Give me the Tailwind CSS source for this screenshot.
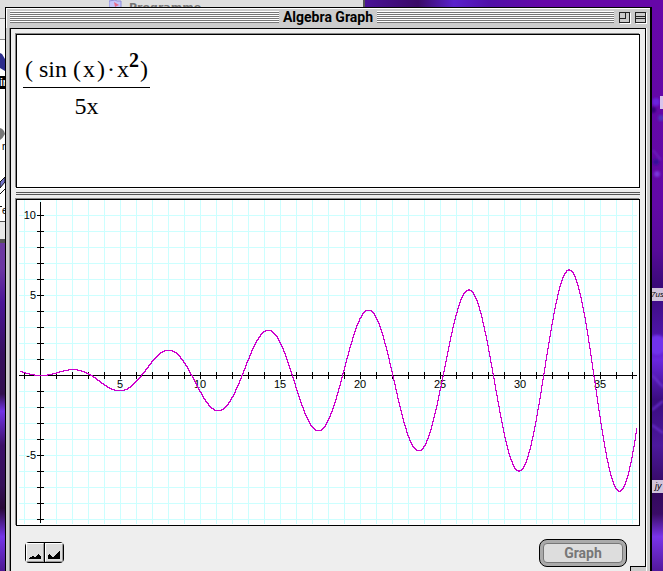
<!DOCTYPE html>
<html lang="en">
<head>
<meta charset="utf-8">
<meta name="viewport" content="width=device-width, initial-scale=1">
<title>Algebra Graph</title>
<script src="https://cdn.jsdelivr.net/npm/@tailwindcss/browser@4"></script>
</head>
<body class="relative h-screen overflow-hidden bg-[#4a0a8c] font-['Liberation_Sans',Arial,sans-serif] text-black">

<!-- Desktop wallpaper -->
<svg class="absolute inset-0 h-full w-full" aria-hidden="true">
  <defs>
    <linearGradient id="wallR" x1="0" y1="0" x2="0" y2="1">
      <stop offset="0" stop-color="#6606a8"/><stop offset=".36" stop-color="#6208a6"/><stop offset=".44" stop-color="#560a98"/><stop offset=".5" stop-color="#3a0a78"/>
      <stop offset=".58" stop-color="#4c14a4"/><stop offset=".63" stop-color="#6a26e0"/><stop offset=".7" stop-color="#3a0c80"/><stop offset=".78" stop-color="#4c189c"/><stop offset=".86" stop-color="#32085c"/>
      <stop offset=".9" stop-color="#3a0c66"/><stop offset=".94" stop-color="#7a34ea"/><stop offset="1" stop-color="#52189c"/>
    </linearGradient>
    <linearGradient id="wallL" x1="0" y1="0" x2="0" y2="1">
      <stop offset=".42" stop-color="#6c3aa0"/><stop offset=".47" stop-color="#6c36a2"/><stop offset=".53" stop-color="#4a1496"/><stop offset=".62" stop-color="#36105e"/><stop offset=".69" stop-color="#32104e"/>
      <stop offset=".72" stop-color="#7234e6"/><stop offset=".78" stop-color="#3c1068"/><stop offset=".85" stop-color="#341058"/><stop offset=".89" stop-color="#280838"/><stop offset=".94" stop-color="#7434e8"/><stop offset="1" stop-color="#4c1890"/>
    </linearGradient>
    <linearGradient id="wallT"><stop offset="0" stop-color="#4a1298"/><stop offset=".3" stop-color="#3a0a66"/><stop offset=".5" stop-color="#5a20cc"/><stop offset=".7" stop-color="#5010a8"/><stop offset="1" stop-color="#6606a8"/></linearGradient>
    <filter id="soft"><feGaussianBlur stdDeviation="1"/></filter>
  </defs>
  <rect width="100%" height="100%" fill="url(#wallL)"/>
  <rect x="364" width="180" height="8" fill="url(#wallT)"/>
  <rect x="544" width="100%" height="100%" fill="url(#wallR)"/>
  <g filter="url(#soft)">
    <circle cx="656" cy="102" r="4" fill="#6a20dc"/><circle cx="653" cy="110" r="3" fill="#35067a"/><circle cx="661" cy="118" r="3" fill="#5030c0"/>
    <circle cx="656" cy="162" r="3" fill="#35109a"/><circle cx="657" cy="174" r="3" fill="#7a34dc"/><path d="M653 150l8 10" stroke="#7340dc"/>
    <circle cx="657" cy="345" r="10" fill="#7130ec"/><path d="M652 375l11 12M652 410l11-9M652 425l11 8" stroke="#6a30d0" stroke-width="2"/>
  </g>
</svg>

<!-- Labels of desktop icons showing beside the window -->
<div class="absolute left-[660px] top-24 h-[13px] w-4 bg-[#d9c4ec]"></div>
<div class="absolute left-[650px] top-72 h-[13px] w-6 overflow-hidden bg-[#d0c4dc] pl-px text-[8px] leading-[13px] italic">7us</div>
<div class="absolute left-[652px] top-[480px] h-[13px] w-6 overflow-hidden bg-[#d0c4dc] pl-[3px] text-[9px] leading-[13px] italic">jy</div>

<!-- Finder window behind -->
<section class="absolute left-0 top-0 h-[243px] w-[365px] overflow-hidden border-r-2 border-b-4 border-[#555] bg-[#dedede]" aria-label="Programme">
  <div class="flex h-[18px] gap-1 pl-[109px]">
    <svg class="h-4 w-4 shrink-0" viewBox="0 0 16 16" aria-hidden="true"><path d="M0 1l6-1 2 1h4v8H0z" fill="#c4c4fa" stroke="#8c8cd8"/><path d="M5 2l5 3-4 2z" fill="#e86a8a"/></svg>
    <span class="text-[11px] leading-4 font-bold text-[#777] font-['DejaVu_Sans',sans-serif]">Programme</span>
  </div>
  <div class="h-[22px] border-y border-[#888] bg-[#eee]"></div>
  <div class="h-[182px] border-b border-[#555] bg-white">
    <svg class="h-[182px] w-5" viewBox="0 0 20 182" aria-hidden="true">
      <path d="M0 13l2 1 3 5v12l-5-3z" fill="#2c2c8c"/><rect y="36" width="5" height="13" fill="#000"/>
      <path d="M0 88q4 1 5 6q-2 4-5 6z" fill="#777"/><path d="M0 142l5-5v5l-5 6z" fill="#7474c8" stroke="#111"/><path d="M0 154l5-5" stroke="#111"/>
      <path d="M0 166.500h2" stroke="#111"/>
      <text x="0" y="46" font-size="10" font-weight="bold" fill="#fff">in</text><text x="2" y="110" font-size="10">n</text><text x="2" y="174" font-size="10">e</text>
    </svg>
  </div>
  <div class="h-5 bg-[#e8e8e8]"></div>
</section>

<!-- Algebra Graph window -->
<main class="relative mt-[7px] mr-[11px] ml-[5px] flex h-[calc(100vh-7px)] flex-col border-t border-r-2 border-l border-black bg-[#ccc]">
  <header class="grid h-5 shrink-0 grid-cols-[1fr_auto_1fr] gap-1 border-t border-l border-white pt-0.5 pr-1 pl-[3px]">
    <div class="h-3 bg-[repeating-linear-gradient(to_bottom,#fff_0_1px,#777_1px_2px)]"></div>
    <h1 class="text-[14px] leading-[13px] font-bold font-['Roboto',sans-serif]">Algebra Graph</h1>
    <div class="flex gap-[5px]">
      <div class="h-3 flex-1 bg-[repeating-linear-gradient(to_bottom,#fff_0_1px,#777_1px_2px)]"></div>
      <button class="mt-px h-[11px] w-[11px]" aria-label="Zoom window">
        <svg class="block h-[11px] w-[11px] overflow-visible" viewBox="0 0 11 11" shape-rendering="crispEdges"><path d="M11.500 1v10.500H1" fill="none" stroke="#fff"/><rect x=".5" y=".5" width="10" height="10" fill="#ccc" stroke="#222"/><path d="M6.500 1v5.500H1" fill="none" stroke="#222"/></svg>
      </button>
      <button class="mt-px h-[11px] w-[11px]" aria-label="Collapse window">
        <svg class="block h-[11px] w-[11px] overflow-visible" viewBox="0 0 11 11" shape-rendering="crispEdges"><path d="M11.500 1v10.500H1" fill="none" stroke="#fff"/><rect x=".5" y=".5" width="10" height="10" fill="#ccc" stroke="#222"/><path d="M1 4.500h9M1 6.500h9" stroke="#222"/></svg>
      </button>
    </div>
  </header>

  <div class="mr-1 ml-1 flex min-h-0 flex-1 flex-col border-x border-t border-black bg-[#eee] px-[5px] pt-[5px] shadow-[-1px_0_0_#888,1px_0_0_#fff]">
    <section class="flex h-[154px] shrink-0 border border-black bg-white pt-3.5 pl-1.5 font-['Liberation_Serif',serif] text-[24px] leading-6 shadow-[-1px_-1px_0_#888]" aria-label="Formula">
      <div class="flex flex-col items-center self-start">
        <div class="h-[39px] border-b border-black px-0.5 pt-2 whitespace-nowrap">( sin (<span class="px-0.5">x</span>)<span class="px-0.5">·</span>x<sup class="relative -top-2.5 pr-px text-[20px] leading-none font-bold">2</sup>)</div>
        <div class="pt-1.5">5x</div>
      </div>
    </section>
    <div class="flex h-[11px] shrink-0 flex-col gap-px border-t border-white pt-[3px]" role="separator"><i class="h-px bg-[#555]"></i><i class="h-px bg-[#555]"></i></div>
    <section class="h-[327px] shrink-0 border border-black bg-white shadow-[-1px_-1px_0_#888]" aria-label="Graph">
      <svg id="plot" class="block h-full w-full font-['Liberation_Sans',Arial,sans-serif] text-[11px]" shape-rendering="crispEdges" role="img" aria-label="Plot of sin(x) times x squared over 5x">
        <path id="grid" fill="none" stroke="#ccffff"/>
        <path id="axes" fill="none" stroke="#000"/>
        <g id="labels"></g>
        <path id="curve" fill="none" stroke="#cc00cc"/>
      </svg>
    </section>
    <footer class="flex items-start justify-between pt-[13px] pr-[13px] pl-[9px]">
      <div class="mt-[3px] flex rounded-sm border border-black bg-black">
        <button class="h-[19px] w-[18px] border border-t-white border-r-[#999] border-b-[#999] border-l-white bg-[#ddd]" aria-label="Zoom out"><svg class="block h-[17px] w-4" viewBox="0 0 16 17" shape-rendering="crispEdges"><path d="M2 15v-1l2-1 1-1h1l1 1h1l2-2 1-1 2 2 1 1v2z"/></svg></button>
        <button class="ml-px h-[19px] w-[18px] border border-t-white border-r-[#999] border-b-[#999] border-l-white bg-[#ddd]" aria-label="Zoom in"><svg class="block h-[17px] w-4" viewBox="0 0 16 17" shape-rendering="crispEdges"><path d="M2 15v-4l1-1 4 3 7-7v9z"/></svg></button>
      </div>
      <button class="h-7 w-[88px] rounded-lg border border-black bg-[#aaa] p-[3px]" disabled><span class="flex h-full items-center justify-center rounded-sm border border-[#777] bg-[#ddd] text-[14px] leading-4 font-bold text-[#777] font-['Roboto',sans-serif]">Graph</span></button>
    </footer>
  </div>
  <!-- Grow box corner -->
  <div class="absolute right-1 bottom-0 h-[5px] w-4 border-t border-l border-black bg-[#ccc]"></div>
</main>

<script>
  const svg = document.getElementById('plot');
  const UNIT = 16, OX = 23, OY = 175;
  function draw() {
    const { width: w, height: h } = svg.getBoundingClientRect();
    let grid = '', axes = `M2 ${OY + .5}H${w - 2}M${OX + .5} 2V${h - 2}`, labels = '';
    for (let i = Math.ceil((3 - OX) / UNIT); OX + i * UNIT < w - 2; i++) {
      const x = OX + i * UNIT;
      grid += `M${x + .5} 0V${h - 1}`;
      axes += `M${x + .5} ${OY - 3}v7`;
      if (i > 0 && i % 5 === 0) labels += `<text x="${x}" y="${OY + 13}" text-anchor="middle">${i}</text>`;
    }
    for (let j = Math.ceil((3 - OY) / UNIT); OY + j * UNIT < h - 2; j++) {
      const y = OY + j * UNIT;
      grid += `M2 ${y + .5}H${w - 2}`;
      axes += `M${OX - 3} ${y + .5}h7`;
      if (j && j % 5 === 0) labels += `<text x="${OX - 4}" y="${y + 4}" text-anchor="end">${-j}</text>`;
    }
    // The curve moves in whole-pixel steps: across, then up or down
    let curve = '';
    for (let x = 2; x <= w - 3; x++) {
      const t = (x - OX) / UNIT;
      const y = Math.round(OY - Math.sin(t) * t / 5 * UNIT) + .5;
      curve += curve ? `H${x + .5}V${y}` : `M${x + .5} ${y}`;
    }
    document.getElementById('grid').setAttribute('d', grid);
    document.getElementById('axes').setAttribute('d', axes);
    document.getElementById('curve').setAttribute('d', curve);
    document.getElementById('labels').innerHTML = labels;
  }
  new ResizeObserver(draw).observe(svg.parentElement);
  addEventListener('load', draw);
</script>
</body>
</html>
